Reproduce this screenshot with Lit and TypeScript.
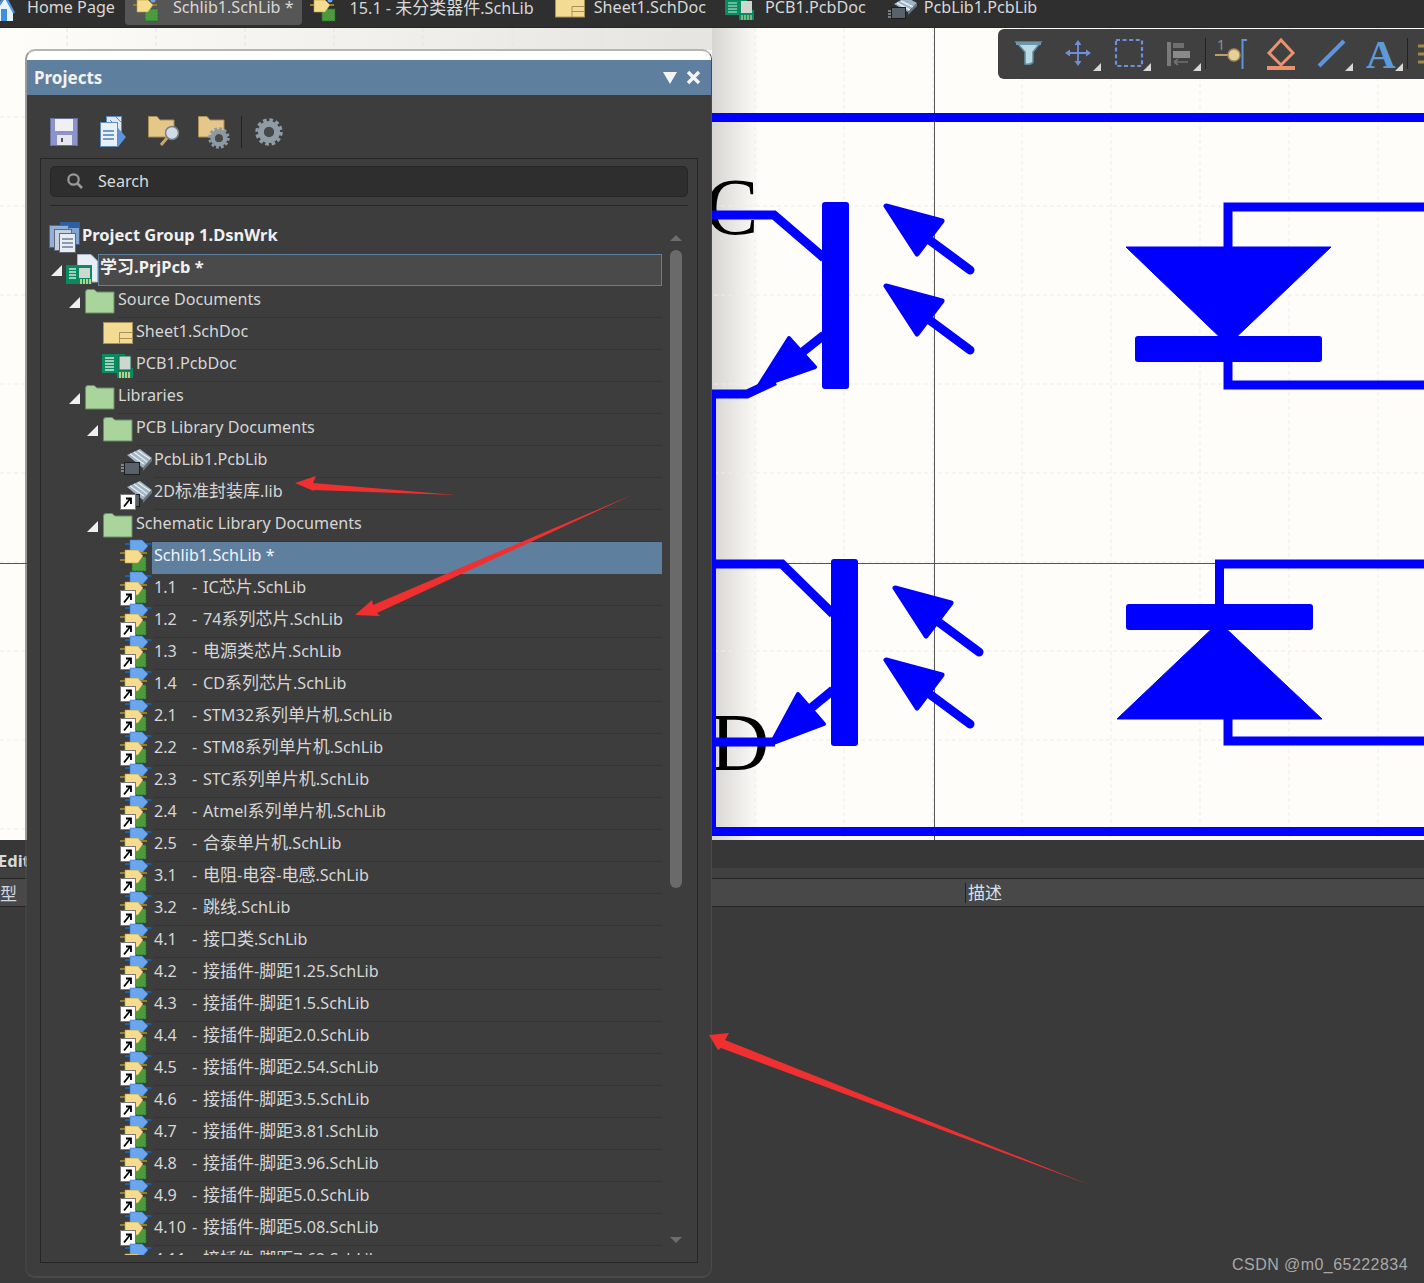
import { LitElement, html, css, svg } from "lit";
import { customElement } from "lit/decorators.js";

const shortcut = svg`<rect x="0.5" y="19.5" width="15" height="15" fill="#fff" stroke="#777"/><path d="M4 31.5 L10 24 M6 23.5 H11 V29" fill="none" stroke="#000" stroke-width="1.8"/>`;
const folder = svg`<path d="M1.5 9 Q1.5 6.5 4 6.5 H10 L13 9 H30 V30 H1.5 Z" fill="#a9d59c" stroke="#6f8a68"/>`;
const sheet = svg`<rect x="1.5" y="7.5" width="29" height="21" fill="#f3db93" stroke="#a5935c"/><path d="M17.5 28 V17.5 H30 M17.5 23.5 H30" fill="none" stroke="#a5935c"/>`;
const pcb = svg`<rect x="0" y="7" width="23" height="19" fill="#0b8a62"/><path d="M3 11h9M3 14h9M3 17h9M3 20h9M3 23h9" stroke="#cfe8d8" stroke-width="1.4"/><rect x="15" y="21" width="16" height="10" fill="#0b8a62"/><rect x="17" y="9" width="12" height="14" fill="#cfd6cf" stroke="#0a6a4a"/><path d="M18 25v6M21 25v6M24 25v6M27 25v6" stroke="#f0e68c" stroke-width="1.5"/>`;
const chip = svg`<path d="M7 12 L20 6 L32 15 L23 25 Z" fill="#9fb3c4"/><path d="M10 11 L24 21M14 9 L27 19M18 7.5 L30 16" stroke="#e6edf3" stroke-width="1.5"/><path d="M23 25 L32 15 V18 L23 28 Z" fill="#6c7680"/><path d="M1 22h3M1 25h3M1 28h3" stroke="#ccc"/><rect x="4.5" y="19.5" width="15" height="12" fill="#59626b" stroke="#1b1f24"/>`;
const schlib = svg`<path d="M5 5h6M26 5h5" stroke="#1d5fa8" stroke-width="2"/><path d="M10 1 H22 L28 7 L22 14 H10 Z" fill="#6aa6ee" stroke="#3d78c0" stroke-width="0.6"/><rect x="12" y="18" width="14" height="14" fill="#4b9a3e" stroke="#2a6b2a" stroke-dasharray="2 1"/><path d="M0 14h6M0 21h6M20 14h7" stroke="#9a7b22" stroke-width="2"/><path d="M5 11 H18 L23 17 L18 24 H5 Z" fill="#f6dc8e" stroke="#bb9a48" stroke-width="0.6"/>`;

const icons: Record<string, unknown> = {
  folder, sheet, pcb, chip, schlib,
  group: svg`<rect x="12.5" y="3.5" width="19" height="22" fill="#7fa5d5" stroke="#2e5f9e"/><rect x="13" y="4" width="18" height="5" fill="#2e5f9e"/><rect x="1.5" y="6.5" width="19" height="22" fill="#8fb0d8" stroke="#3d6ca8"/><rect x="6.5" y="10.5" width="17" height="21" fill="#c3d0de" stroke="#667"/><rect x="11.5" y="14.5" width="16" height="19" fill="#e7edf3" stroke="#667"/><path d="M14 20h11M14 24h11M14 28h11" stroke="#6b7f96" stroke-width="1.5"/>`,
  prj: svg`<path d="M11.5 3.5 H25 L31.5 10 V31 H11.5 Z" fill="#e8eef5" stroke="#aab6c4"/><rect x="0" y="14" width="26" height="19" fill="#0b8a62"/><path d="M3 18h7M3 21h7M3 24h7M3 27h7" stroke="#cfe8d8" stroke-width="1.4"/><rect x="13" y="17" width="11" height="10" fill="#cfd6cf"/><path d="M15 28v5M18 28v5M21 28v5M24 28v5" stroke="#f0e68c" stroke-width="1.5"/>`,
};

type Row = { x: number; icon: string; text?: string; num?: string; bold?: boolean; arrow?: boolean; link?: boolean; cls?: string };
const libs: [string, string][] = [
  ["1.1", "IC芯片"], ["1.2", "74系列芯片"], ["1.3", "电源类芯片"], ["1.4", "CD系列芯片"],
  ["2.1", "STM32系列单片机"], ["2.2", "STM8系列单片机"], ["2.3", "STC系列单片机"], ["2.4", "Atmel系列单片机"], ["2.5", "合泰单片机"],
  ["3.1", "电阻-电容-电感"], ["3.2", "跳线"], ["4.1", "接口类"],
  ["4.2", "接插件-脚距1.25"], ["4.3", "接插件-脚距1.5"], ["4.4", "接插件-脚距2.0"], ["4.5", "接插件-脚距2.54"], ["4.6", "接插件-脚距3.5"],
  ["4.7", "接插件-脚距3.81"], ["4.8", "接插件-脚距3.96"], ["4.9", "接插件-脚距5.0"], ["4.10", "接插件-脚距5.08"], ["4.11", "接插件-脚距7.62"],
];
const rows: Row[] = [
  { x: 82, icon: "group", text: "Project Group 1.DsnWrk", bold: true, cls: "plain" },
  { x: 100, icon: "prj", text: "学习.PrjPcb *", bold: true, arrow: true, cls: "focus" },
  { x: 118, icon: "folder", text: "Source Documents", arrow: true },
  { x: 136, icon: "sheet", text: "Sheet1.SchDoc" },
  { x: 136, icon: "pcb", text: "PCB1.PcbDoc" },
  { x: 118, icon: "folder", text: "Libraries", arrow: true },
  { x: 136, icon: "folder", text: "PCB Library Documents", arrow: true },
  { x: 154, icon: "chip", text: "PcbLib1.PcbLib" },
  { x: 154, icon: "chip", text: "2D标准封装库.lib", link: true },
  { x: 136, icon: "folder", text: "Schematic Library Documents", arrow: true },
  { x: 154, icon: "schlib", text: "Schlib1.SchLib *", cls: "sel" },
  ...libs.map(([num, t]) => ({ x: 154, icon: "schlib", num, text: t + ".SchLib", link: true })),
];

const mixed = (t: string) => t.split(/([\u3000-\u9fff]+)/).map((p, i) => (i % 2 ? html`<span class="cjk">${p}</span>` : p));

const gear = (c: string) => svg`<circle cx="14" cy="14" r="12" fill="none" stroke="${c}" stroke-width="3.5" stroke-dasharray="3.6 2.68"/><circle cx="14" cy="14" r="8" fill="none" stroke="${c}" stroke-width="6"/><circle cx="14" cy="14" r="5" fill="#46484a"/>`;

const tabIcons: Record<string, unknown> = {
  home: svg`<path d="M-6 14 L5 -2 L13 12 V21 H-6 Z" fill="#e8f2fc"/><rect x="1" y="9" width="6" height="12" fill="#3f8fe0"/><path d="M-6 12 L5 -4 L14 13" fill="none" stroke="#4d94dd" stroke-width="2.2"/>`,
  sch: svg`<circle cx="20" cy="0" r="2.5" fill="#6aa6ee"/><rect x="12" y="9" width="13" height="12" fill="#4b9a3e" stroke="#2a6b2a" stroke-dasharray="2 1"/><path d="M0 5h5M18 5h6" stroke="#9a7b22" stroke-width="2"/><path d="M4 0 H15 L20 5 L15 12 H4 Z" fill="#f6dc8e" stroke="#bb9a48" stroke-width=".6"/>`,
  sheet: svg`<rect x="0.5" y="-1" width="29" height="18" fill="#f3db93" stroke="#a5935c"/><path d="M17 17 V6.5 H29.5 M17 11.5 H29.5" fill="none" stroke="#a5935c"/>`,
  pcb: svg`<rect x="0" y="0" width="22" height="15" fill="#0b8a62"/><path d="M3 3h9M3 6h9M3 9h9M3 12h9" stroke="#cfe8d8"/><rect x="14" y="10" width="15" height="10" fill="#0b8a62"/><rect x="16" y="1" width="11" height="12" fill="#cfd6cf"/><path d="M17 15v5M20 15v5M23 15v5M26 15v5" stroke="#f0e68c"/>`,
  chip: svg`<path d="M6 4 L18 -3 L29 3 L20 12 Z" fill="#9fb3c4"/><path d="M9 3 L22 10M13 1 L25 7" stroke="#e6edf3" stroke-width="1.5"/><path d="M20 12 L29 3 V6 L20 15 Z" fill="#6c7680"/><rect x="3.5" y="7.5" width="14" height="11" fill="#59626b" stroke="#1b1f24"/><path d="M0 11h3M0 14h3M0 17h3" stroke="#ccc"/>`,
};

const tabs: [string, string, number, number, number, number, number, number][] = [
  ["home", "Home Page", 12, 15, 0, 0, 0, 0],
  ["sch", "Schlib1.SchLib *", 25, 15, 10, 8, 1, 8],
  ["sch", "15.1 - 未分类器件.SchLib", 27, 13, 8, 0, 0, 0],
  ["sheet", "Sheet1.SchDoc", 30, 9, 21, 0, 0, 0],
  ["pcb", "PCB1.PcbDoc", 29, 11, 19, 0, 0, 0],
  ["chip", "PcbLib1.PcbLib", 29, 7, 22, 0, 0, 0],
];

const P = "#0000ff";
const photo = (tx: number, ty: number) => svg`<path d="M${tx + 34} ${ty + 27} L${tx + 84} ${ty + 64}" stroke="${P}" stroke-width="9" stroke-linecap="round"/><path d="M${tx} ${ty} L${tx + 56} ${ty + 15} L${tx + 31} ${ty + 48} Z" fill="${P}" stroke="${P}" stroke-width="5" stroke-linejoin="round"/>`;

@customElement("app-root")
export class AppRoot extends LitElement {
  static styles = css`
    :host { display: block; position: relative; width: 1424px; height: 1283px; overflow: hidden; background: #3a3a3a;
      font-family: "Noto Sans", "Noto Sans CJK SC", sans-serif; font-size: 16.15px; color: #d6d6d6; }
    .cjk { font-size: 17px; }
    .tabs { height: 28px; background: #2f2f2f; display: flex; overflow: hidden; align-items: flex-start; box-sizing: border-box; border-bottom: 1px solid #282828; }
    .tab { height: 25px; display: flex; align-items: flex-start; margin-top: -5px; color: #d8d8d8; white-space: nowrap; line-height: 25px; box-sizing: border-box; flex: none; }
    .tab svg { flex: none; margin-top: 5px; overflow: visible; }
    .tab.active { background: #565656; border-radius: 0 0 4px 4px; height: 30px; }
    .canvas { height: 812px; background: #fffdf9; display: block; }
    .canvas svg { display: block; }
    .bottom { height: 443px; background: #3a3a3a; display: flex; flex-direction: column; }
    .b1 { background: #373737; display: flex; align-items: center; font-weight: 700; color: #d8d8d8; font-size: 16.5px; padding-top: 12px; height: 16px; overflow: hidden; margin-left: -2px; padding-left: 0; }
    .b2 { height: 10px; background: #404040; border-bottom: 1px solid #222; }
    .b3 { height: 27px; background: #484848; border-bottom: 1px solid #252525; display: flex; align-items: center; }
    .b3 .type { width: 965px; font-size: 17px; color: #cfd8e0; }
    .b3 .desc { border-left: 1px solid #222; padding-left: 2px; height: 20px; line-height: 20px; color: #d8e0e8; font-size: 17px; }
    .mark { position: absolute; right: 16px; top: 1255px; font-family: "Liberation Sans", sans-serif; font-size: 16px; color: #a8a8a8; line-height: 20px; letter-spacing: 0.45px; }
    .toolbar { position: absolute; left: 998px; top: 29px; width: 426px; height: 50px; background: #404040; border-radius: 6px 0 0 6px; }
    .toolbar svg { display: block; }
    .panel { position: absolute; left: 25px; top: 49px; width: 687px; height: 1229px; background: #3d3d3d; background-clip: padding-box; border-style: solid; border-width: 2px 1px 2px 2px; border-color: #b8b5b0 #4a4a4a #4a4a4a rgba(74, 74, 74, 0.55); border-radius: 10px; box-sizing: border-box; overflow: hidden; display: flex; flex-direction: column; }
    .white { height: 9px; background: #fff; flex: none; }
    .head { height: 35px; flex: none; background: #5f7f9f; display: flex; align-items: center; padding: 0 10px 0 7px; font-weight: 700; color: #f2f2f2; font-size: 17px; }
    .head span { flex: 1; }
    .head svg { display: block; margin-left: 9px; }
    .tools { height: 63px; flex: none; display: flex; align-items: center; padding: 8px 0 0 21px; box-sizing: border-box; }
    .tools svg { display: block; flex: none; }
    .frame { flex: 1; margin: 0 13px 13px 13px; border: 1px solid #252525; display: flex; flex-direction: column; min-height: 0; }
    .search { margin: 7px 9px 0; height: 31px; flex: none; background: #2e2e2e; border: 1px solid #262626; border-radius: 5px; display: flex; align-items: center; padding: 0 0 2px 15px; box-sizing: border-box; color: #dadada; gap: 14px; }
    .rule { margin: 8px 9px 0; border-top: 1px solid #262626; flex: none; }
    .content { flex: 1; display: flex; min-height: 0; margin-top: 16px; padding-bottom: 7px; }
    .list { width: 621px; flex: none; overflow: hidden; }
    .row { height: 32px; display: flex; align-items: center; box-sizing: border-box; padding-bottom: 6px; white-space: nowrap; }
    .arrow { width: 18px; flex: none; height: 10px; margin-top: 6px; }
    .arrow svg { display: block; margin-left: 1px; }
    .ico { width: 32px; height: 32px; flex: none; margin: 0 2px 0 -2px; }
    .ico svg { display: block; overflow: visible; }
    .label { flex: 1; align-self: stretch; display: flex; align-items: center; border-bottom: 1px solid #343434; margin-bottom: -6px; padding-bottom: 6px; line-height: 20px; }
    .label > div { white-space: pre; }
    .label.plain { border-bottom-color: transparent; }
    .label.bold { font-weight: 700; color: #f0f0f0; font-size: 16.5px; }
    .label.focus { background: #4a4a4a; border: 1px solid #5f7f9f; margin-left: -2px; padding-left: 1px; box-sizing: border-box; }
    .label.sel { background: #5f7f9f; margin-left: -2px; padding-left: 2px; color: #f0f4f8; border-bottom: none; }
    .num { display: inline-block; width: 38px; }
    .dash { display: inline-block; width: 11px; }
    .scroll { width: 28px; flex: none; margin-top: -1px; display: flex; flex-direction: column; align-items: center; }
    .scroll .up, .scroll .down { width: 0; height: 0; border-left: 6px solid transparent; border-right: 6px solid transparent; }
    .scroll .up { border-bottom: 6px solid #6d6d6d; margin: 14px 0 9px; }
    .scroll .down { border-top: 6px solid #6d6d6d; margin-top: 349px; }
    .thumb { width: 12px; height: 638px; background: #6a6a6a; border-radius: 6px; flex: none; }
    .marks { position: absolute; left: 0; top: 0; pointer-events: none; }
  `;

  private schematic() {
    const gx = [...Array(8).keys()].map((i) => 755 + 89 * i);
    const gy = [...Array(9).keys()].map((i) => 117 + 89 * i);
    return svg`<svg width="1424" height="812" viewBox="0 28 1424 812">
      <defs><linearGradient id="sh" x1="0" x2="1"><stop offset="0" stop-color="#d6d5d2"/><stop offset="1" stop-color="#fffdf9"/></linearGradient>
      <linearGradient id="sl" x1="0" x2="1"><stop offset="0" stop-color="#fffdf9"/><stop offset="1" stop-color="#e6e4e0"/></linearGradient></defs>
      <rect x="712" y="28" width="48" height="812" fill="url(#sh)"/>
      <rect x="0" y="28" width="712" height="22" fill="url(#sl)"/>
      ${gx.map((x) => svg`<path d="M${x} 28 V840" stroke="#efedE8" stroke-dasharray="4 3"/>`)}
      ${[...Array(8).keys()].map((i) => svg`<path d="M${-22 + 89 * i} 28 V840" stroke="#e6e4e0" stroke-dasharray="4 3"/>`)}
      ${gy.map((y) => svg`<path d="M0 ${y} H1424" stroke="#efedE8" stroke-dasharray="4 3"/>`)}
      <text x="705" y="234" font-family="Liberation Serif" font-size="80" fill="#000">C</text>
      <text x="710" y="770" font-family="Liberation Serif" font-size="82" fill="#000">D</text>
      <path d="M0 563.5 H1424 M934.5 28 V840" stroke="#555" stroke-width="1"/>
      <rect x="712" y="113" width="712" height="9" fill="${P}"/>
      <rect x="712" y="827" width="712" height="9" fill="${P}"/>
      <path d="M714 390 V830" stroke="${P}" stroke-width="4" fill="none"/>
      <g fill="none" stroke="${P}" stroke-width="9">
        <path d="M712 215 H774 L824 258"/>
        <path d="M712 394 H747 L775 381"/>
        <path d="M824 335 L795 358"/>
        <path d="M712 564 H782 L833 614"/>
        <path d="M712 742 H775"/>
        <path d="M833 690 L805 713"/>
        <path d="M1424 207 H1228 V250"/>
        <path d="M1228 360 V385 H1424"/>
        <path d="M1424 564 H1219.5 V606"/>
        <path d="M1228 717 V741 H1424"/>
      </g>
      <rect x="822" y="202" width="27" height="187" rx="3" fill="${P}"/>
      <rect x="831" y="559" width="27" height="187" rx="3" fill="${P}"/>
      <path d="M758 387 L789 338 L815 367 Z" fill="${P}" stroke="${P}" stroke-width="4" stroke-linejoin="round"/>
      <path d="M771 744 L798 694 L824 724 Z" fill="${P}" stroke="${P}" stroke-width="4" stroke-linejoin="round"/>
      ${photo(886, 206)}${photo(886, 286)}${photo(895, 588)}${photo(886, 660)}
      <path d="M1126 247 H1331 L1228 345 Z" fill="${P}" stroke="${P}" stroke-linejoin="round"/>
      <rect x="1135" y="336" width="187" height="26" rx="3" fill="${P}"/>
      <rect x="1126" y="604" width="187" height="26" rx="3" fill="${P}"/>
      <path d="M1219 622 L1322 719 H1117 Z" fill="${P}" stroke="${P}" stroke-linejoin="round"/>
    </svg>`;
  }

  private toolbar() {
    return html`<div class="toolbar"><svg width="426" height="50" viewBox="998 0 426 50">
      <path d="M1016 13 H1041 L1033 23 V33 Q1031 36 1025 35 V23 Z" fill="#b9dbe8" stroke="#5f8aa0" stroke-width="1.5"/>
      <path d="M1016 13 H1041 V16 H1016 Z" fill="#6f97aa"/>
      <path d="M1078 13 V35 M1067 24 H1089" stroke="#6f8fd8" stroke-width="1.8" fill="none"/>
      <path d="M1078 11 l-3.5 5 h7 Z M1078 37 l-3.5 -5 h7 Z M1065 24 l5 -3.5 v7 Z M1091 24 l-5 -3.5 v7 Z" fill="#6f8fd8"/>
      <rect x="1116" y="11" width="26" height="26" fill="none" stroke="#6f8fd8" stroke-width="2.2" stroke-dasharray="4 2.6"/>
      <path d="M1167 13 H1171 V37 H1167 Z" fill="#7a7a7a"/><rect x="1173" y="14" width="11" height="5" fill="#6f6f6f"/><rect x="1173" y="22" width="17" height="7" fill="#8a8a8a"/><path d="M1174 33 H1188 M1174 33 l4 -3 M1174 33 l4 3" stroke="#6f6f6f" stroke-width="1.6" fill="none"/>
      <text x="1217" y="21" font-family="Noto Sans" font-size="14" fill="#8f8f8f">1</text>
      <path d="M1215 26 H1232" stroke="#c0a060" stroke-width="2"/><circle cx="1234" cy="26" r="6" fill="#e6cf98" stroke="#a88d58" stroke-width="1.4"/>
      <path d="M1247 11 H1242.5 V40" fill="none" stroke="#5f94d8" stroke-width="2"/>
      <path d="M1281 11 L1293 24 L1281 36 L1269 24 Z" fill="none" stroke="#e8926e" stroke-width="3"/>
      <rect x="1267" y="37" width="28" height="4" fill="#e8926e"/>
      <path d="M1319 37 L1344 12" stroke="#5f94d8" stroke-width="4"/>
      <text x="1366" y="39" font-family="Liberation Serif" font-weight="700" font-size="41" fill="#5f9ad8">A</text>
      <path d="M1418 17 H1424 M1418 25 H1424 M1418 33 H1424" stroke="#a08848" stroke-width="3"/>
      <path d="M1205.5 9 V40 M1407.5 9 V40" stroke="#222"/>
      <path d="M1101 34 V42 H1093 Z M1151 34 V42 H1143 Z M1201 34 V42 H1193 Z M1353 34 V42 H1345 Z M1403 34 V42 H1395 Z" fill="#d8d8d8"/>
    </svg></div>`;
  }

  private tree() {
    return html`<div class="list">${rows.map((r) => html`<div class="row" style="padding-left:${r.x - 32 - 41 - (r.arrow ? 18 : 0)}px">
      ${r.arrow ? html`<div class="arrow"><svg width="11" height="11"><path d="M11 0 V11 H0 Z" fill="#f0f0f0"/></svg></div>` : ""}
      <div class="ico"><svg width="32" height="32" viewBox="0 0 32 32">${icons[r.icon]}${r.link ? shortcut : ""}</svg></div>
      <div class="label ${r.bold ? "bold" : ""} ${r.cls ?? ""}"><div>${r.num ? html`<span class="num">${r.num}</span><span class="dash">-</span>` : ""}${mixed(r.text ?? "")}</div></div>
    </div>`)}</div>`;
  }

  render() {
    return html`
      <div class="tabs">
        ${tabs.map(([ic, t, w, gap, ml, pl, active, mr]) => html`<div class="tab ${active ? "active" : ""}" style="margin-left:${ml}px;padding-left:${pl}px;padding-right:${mr}px">
          <svg width="${w}" height="20" viewBox="0 0 ${w} 20" style="margin-right:${gap}px">${tabIcons[ic]}</svg><span>${mixed(t)}</span></div>`)}
      </div>
      <div class="canvas">${this.schematic()}</div>
      <div class="bottom">
        <div class="b1">Edit</div>
        <div class="b2"></div>
        <div class="b3"><div class="type">型</div><div class="desc">描述</div></div>
      </div>
      <div class="mark">CSDN @m0_65222834</div>
      ${this.toolbar()}
      <div class="panel">
        <div class="white"></div>
        <div class="head"><span>Projects</span>
          <svg width="14" height="13"><path d="M0 1 H14 L7 13 Z" fill="#f4f4f4"/></svg>
          <svg width="15" height="15"><path d="M2 2 L13 13 M13 2 L2 13" stroke="#f4f4f4" stroke-width="3.4"/></svg>
        </div>
        <div class="tools"><svg width="260" height="36" viewBox="48 113 260 36">
          <rect x="50.5" y="118.5" width="27" height="27" fill="#8d92c8" stroke="#6a6fa0"/><rect x="55" y="119" width="18" height="12" fill="#eef0f4"/><rect x="57" y="135" width="15" height="10" fill="#e6e6ee"/><rect x="61" y="138" width="2" height="4" fill="#555"/>
          <rect x="106.5" y="116.5" width="15" height="22" fill="#dfe8f2" stroke="#5f8cc0"/><path d="M115 116 l6 6M110 120l5 5" stroke="#5f8cc0"/><rect x="100.5" y="122.5" width="17" height="24" fill="#eaf0f7" stroke="#5f8cc0"/><path d="M103 131h11M103 135h11M103 139h11" stroke="#4d7fb5" stroke-width="1.6"/><path d="M118 128 L126 137 L118 147 Z" fill="#5f94d8"/>
          <path d="M148.5 116.5 H157 L160 120 H174 V137 H148.5 Z" fill="#e5c78a" stroke="#a88d58"/>
          <circle cx="172" cy="133" r="6.5" fill="#cfdceb" stroke="#7f7f7f" stroke-width="1.5"/><path d="M167 138 L161 145" stroke="#c8a868" stroke-width="3"/>
          <path d="M198.5 116.5 H207 L210 120 H224 V137 H198.5 Z" fill="#e5c78a" stroke="#a88d58"/>
          <g transform="translate(208,127) scale(.78)">${gear("#8b9aa5")}</g>
          <path d="M241.5 116 V148" stroke="#222"/>
          <g transform="translate(255,118)">${gear("#8f9ca6")}</g>
        </svg></div>
        <div class="frame">
          <div class="search">
            <svg width="18" height="18"><circle cx="7.5" cy="7.5" r="5.2" fill="none" stroke="#999" stroke-width="2.2"/><path d="M11 11 L16 16" stroke="#999" stroke-width="2.6"/></svg>
            <span>Search</span>
          </div>
          <div class="rule"></div>
          <div class="content">
            ${this.tree()}
            <div class="scroll"><div class="up"></div><div class="thumb"></div><div class="down"></div></div>
          </div>
        </div>
      </div>
      <svg class="marks" width="1424" height="1283">
        <path d="M295 483 L316 476 L313 483 L455 495 L313 490 L316 492 Z" fill="#f03030"/>
        <path d="M355 615 L372 600 L373 605 L632 495 L377 613 L380 616 Z" fill="#f03030"/>
        <path d="M709 1035 L729 1033 L725 1040 L1090 1185 L721 1048 L718 1050 Z" fill="#f03030"/>
      </svg>
    `;
  }
}
